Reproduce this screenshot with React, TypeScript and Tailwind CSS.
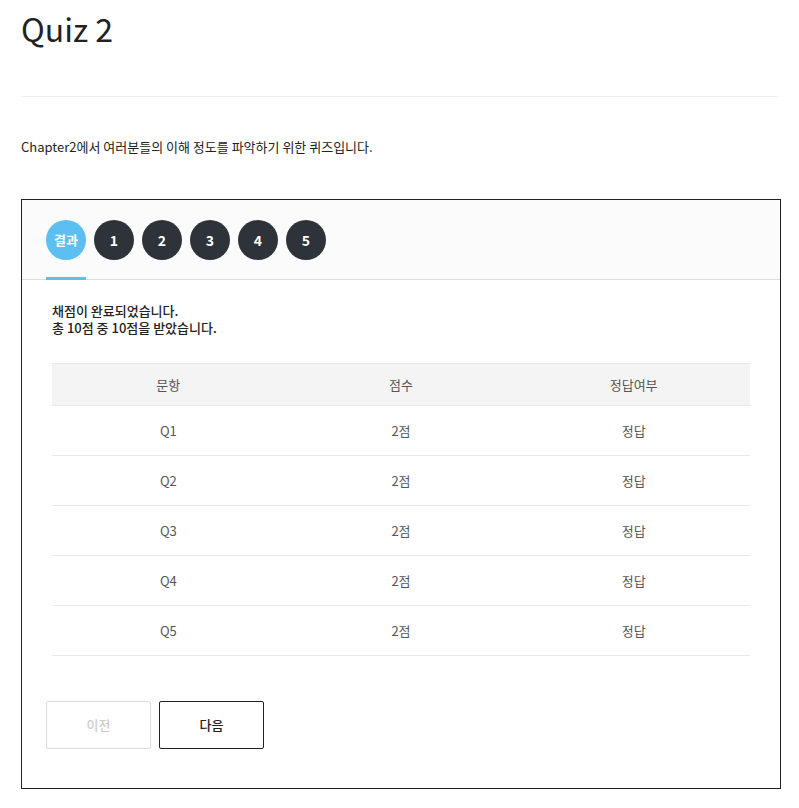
import React from "react";

const rows = [
  { q: "Q1", score: "2점", result: "정답" },
  { q: "Q2", score: "2점", result: "정답" },
  { q: "Q3", score: "2점", result: "정답" },
  { q: "Q4", score: "2점", result: "정답" },
  { q: "Q5", score: "2점", result: "정답" },
];

const App = () => {
  return (
    <div className="min-h-screen bg-white px-[21px] pt-[6px] pb-4 text-[#222] [font-family:'Noto_Sans_CJK_KR','Noto_Sans',sans-serif]">
      {/* Title */}
      <h1 className="text-[32px] leading-[44px] font-normal text-[#222]">Quiz 2</h1>
      <div className="mt-[46px] border-t border-[#eeeeee]" />

      <p className="mt-[40px] text-[13px] leading-[20px] text-[#222]">
        Chapter2에서 여러분들의 이해 정도를 파악하기 위한 퀴즈입니다.
      </p>

      {/* Quiz box */}
      <div className="mt-[42px] w-[760px] border border-[#222]">
        {/* Tabs */}
        <div className="flex h-[80px] items-start gap-2 border-b border-[#dddddd] bg-[#fbfbfb] px-6 pt-5">
          <div className="flex h-[60px] flex-col">
            <span className="flex h-10 w-10 items-center justify-center rounded-full bg-[#5bbff2] text-[13px] font-bold text-white">
              결과
            </span>
            <span className="mt-auto h-[3px] w-10 bg-[#5bbff2]" />
          </div>
          {[1, 2, 3, 4, 5].map((n) => (
            <span
              key={n}
              className="flex h-10 w-10 items-center justify-center rounded-full bg-[#2e3239] text-[14px] font-bold text-white"
            >
              {n}
            </span>
          ))}
        </div>

        {/* Result */}
        <div className="px-[30px] pt-[22px]">
          <p className="text-[13px] font-medium leading-[17px] text-[#222]">
            채점이 완료되었습니다.
            <br />
            총 10점 중 10점을 받았습니다.
          </p>

          <table className="mt-[27px] w-full table-fixed border-t border-[#e8e8e8] text-[13px] text-[#555]">
            <thead>
              <tr className="h-[42px] bg-[#f4f4f4]">
                <th className="font-normal">문항</th>
                <th className="font-normal">점수</th>
                <th className="font-normal">정답여부</th>
              </tr>
            </thead>
            <tbody>
              {rows.map((r) => (
                <tr key={r.q} className="h-[50px] border-t border-[#e8e8e8] last:border-b">
                  <td className="text-center">{r.q}</td>
                  <td className="text-center">{r.score}</td>
                  <td className="text-center">{r.result}</td>
                </tr>
              ))}
            </tbody>
          </table>
        </div>

        {/* Buttons */}
        <div className="flex gap-2 px-6 pt-[45px] pb-[39px]">
          <button className="h-[48px] w-[105px] rounded-[2px] border border-[#dddddd] bg-white text-[13px] font-medium text-[#cccccc]">
            이전
          </button>
          <button className="h-[48px] w-[105px] rounded-[2px] border border-[#222] bg-white text-[13px] font-medium text-[#222]">
            다음
          </button>
        </div>
      </div>
    </div>
  );
};

export default App;
